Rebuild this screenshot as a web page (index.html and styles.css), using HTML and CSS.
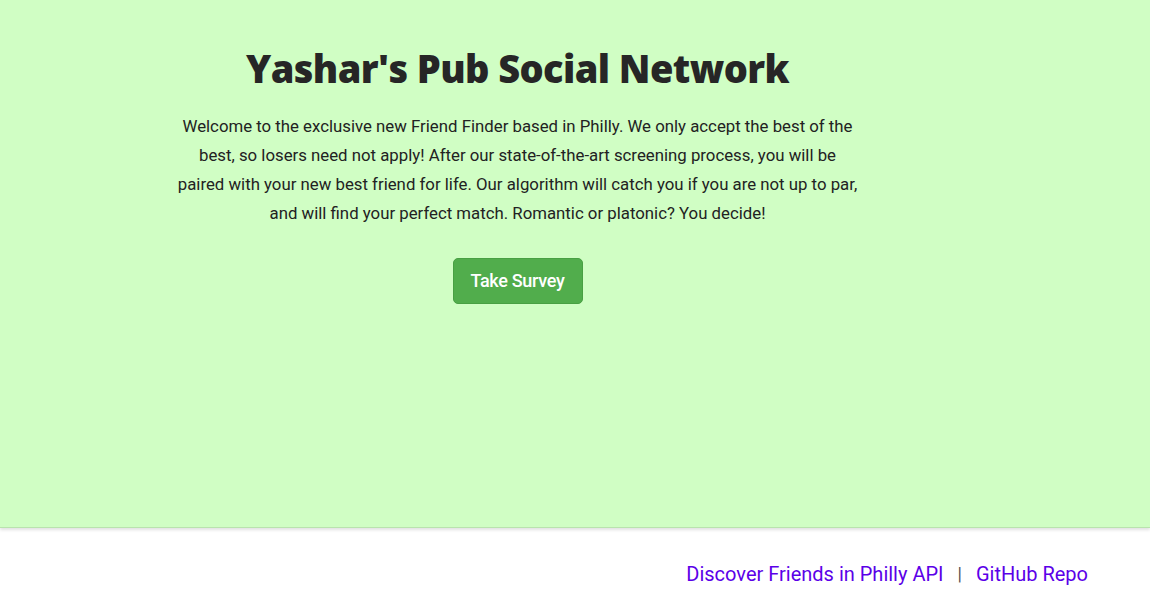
FILE: index.html
```html
<!DOCTYPE html>
<html lang="en">
<head>
<meta charset="utf-8">
<title>Yashar's Pub Social Network</title>
<link rel="stylesheet" href="styles.css">
</head>
<body>
<main class="hero">
  <div class="intro">
    <h1 class="title">Yashar's Pub Social Network</h1>
    <p class="lead">Welcome to the exclusive new Friend Finder based in Philly. We only accept the best of the best, so losers need not apply! After our state-of-the-art screening process, you will be paired with your new best friend for life. Our algorithm will catch you if you are not up to par, and will find your perfect match. Romantic or platonic? You decide!</p>
    <a class="btn-survey" href="#">Take Survey</a>
  </div>
</main>
<footer class="footer">
  <a class="footer-link" href="#">Discover Friends in Philly API</a>
  <span class="sep">|</span>
  <a class="footer-link" href="#">GitHub Repo</a>
</footer>
</body>
</html>
```
FILE: styles.css
```css
* { box-sizing: border-box; }
html, body { margin: 0; padding: 0; }
body {
  font-family: Roboto, "Liberation Sans", sans-serif;
  background: #ffffff;
  color: #222;
}
.hero {
  height: 528px;
  background: #d0fec4;
  box-shadow: 0 2px 3px rgba(0,0,0,0.12);
  border-bottom: 1px solid #b9e3ae;
  position: relative;
  z-index: 1;
}
.intro {
  margin-left: 15%;
  width: 60%;
  padding-top: 44px;
  display: flex;
  flex-direction: column;
  align-items: center;
  text-align: center;
}
.title {
  margin: 0;
  font-family: "Open Sans", sans-serif;
  font-weight: 800;
  font-size: 38px;
  line-height: 48px;
  color: #262626;
  letter-spacing: -0.6px;
}
.lead {
  margin: 20px 0 0;
  max-width: 684px;
  font-size: 16.8px;
  line-height: 29px;
  color: #222;
}
.btn-survey {
  margin-top: 30px;
  display: inline-block;
  width: 130px;
  height: 46px;
  line-height: 44px;
  background: #51ad4c;
  border: 1px solid #48a043;
  border-radius: 5px;
  color: #fff;
  font-size: 18px;
  font-weight: 500;
  text-decoration: none;
  letter-spacing: -0.3px;
}
.footer {
  height: 75px;
  display: flex;
  justify-content: flex-end;
  align-items: center;
  padding: 16px 62px 0 0;
  font-size: 20px;
  gap: 14px;
}
.footer-link {
  color: #5b00e8;
  text-decoration: none;
}
.sep { color: #555; font-size: 18px; }
```
